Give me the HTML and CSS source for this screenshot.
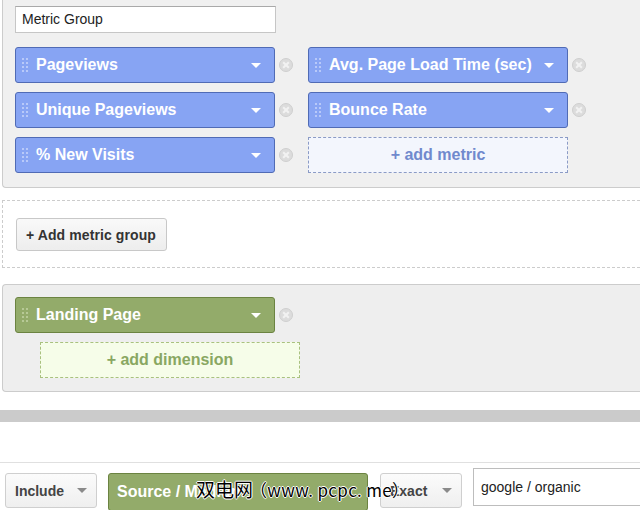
FILE: index.html
```html
<!DOCTYPE html>
<html>
<head>
<meta charset="utf-8">
<link rel="stylesheet" href="styles.css">
</head>
<body>
<div class="panel metrics">
  <div class="name-input">Metric Group</div>
  <div class="grid">
    <div class="cell"><div class="pill blue"><svg class="grip" width="6" height="14" viewBox="0 0 6 14"><g fill="#c9d6fb"><circle cx="1" cy="1" r="1"/><circle cx="5" cy="1" r="1"/><circle cx="1" cy="5" r="1"/><circle cx="5" cy="5" r="1"/><circle cx="1" cy="9" r="1"/><circle cx="5" cy="9" r="1"/><circle cx="1" cy="13" r="1"/><circle cx="5" cy="13" r="1"/></g></svg><span class="label">Pageviews</span><span class="arrow"></span></div><span class="close"></span></div>
    <div class="cell"><div class="pill blue"><svg class="grip" width="6" height="14" viewBox="0 0 6 14"><g fill="#c9d6fb"><circle cx="1" cy="1" r="1"/><circle cx="5" cy="1" r="1"/><circle cx="1" cy="5" r="1"/><circle cx="5" cy="5" r="1"/><circle cx="1" cy="9" r="1"/><circle cx="5" cy="9" r="1"/><circle cx="1" cy="13" r="1"/><circle cx="5" cy="13" r="1"/></g></svg><span class="label">Avg. Page Load Time (sec)</span><span class="arrow"></span></div><span class="close"></span></div>
    <div class="cell"><div class="pill blue"><svg class="grip" width="6" height="14" viewBox="0 0 6 14"><g fill="#c9d6fb"><circle cx="1" cy="1" r="1"/><circle cx="5" cy="1" r="1"/><circle cx="1" cy="5" r="1"/><circle cx="5" cy="5" r="1"/><circle cx="1" cy="9" r="1"/><circle cx="5" cy="9" r="1"/><circle cx="1" cy="13" r="1"/><circle cx="5" cy="13" r="1"/></g></svg><span class="label">Unique Pageviews</span><span class="arrow"></span></div><span class="close"></span></div>
    <div class="cell"><div class="pill blue"><svg class="grip" width="6" height="14" viewBox="0 0 6 14"><g fill="#c9d6fb"><circle cx="1" cy="1" r="1"/><circle cx="5" cy="1" r="1"/><circle cx="1" cy="5" r="1"/><circle cx="5" cy="5" r="1"/><circle cx="1" cy="9" r="1"/><circle cx="5" cy="9" r="1"/><circle cx="1" cy="13" r="1"/><circle cx="5" cy="13" r="1"/></g></svg><span class="label">Bounce Rate</span><span class="arrow"></span></div><span class="close"></span></div>
    <div class="cell"><div class="pill blue"><svg class="grip" width="6" height="14" viewBox="0 0 6 14"><g fill="#c9d6fb"><circle cx="1" cy="1" r="1"/><circle cx="5" cy="1" r="1"/><circle cx="1" cy="5" r="1"/><circle cx="5" cy="5" r="1"/><circle cx="1" cy="9" r="1"/><circle cx="5" cy="9" r="1"/><circle cx="1" cy="13" r="1"/><circle cx="5" cy="13" r="1"/></g></svg><span class="label">% New Visits</span><span class="arrow"></span></div><span class="close"></span></div>
    <div class="cell"><div class="add add-metric">+ add metric</div></div>
  </div>
</div>

<div class="dashed-section">
  <div class="btn">+ Add metric group</div>
</div>

<div class="panel dims">
  <div class="cell"><div class="pill green"><svg class="grip" width="6" height="14" viewBox="0 0 6 14"><g fill="#c3d3a6"><circle cx="1" cy="1" r="1"/><circle cx="5" cy="1" r="1"/><circle cx="1" cy="5" r="1"/><circle cx="5" cy="5" r="1"/><circle cx="1" cy="9" r="1"/><circle cx="5" cy="9" r="1"/><circle cx="1" cy="13" r="1"/><circle cx="5" cy="13" r="1"/></g></svg><span class="label">Landing Page</span><span class="arrow"></span></div><span class="close"></span></div>
  <div class="add add-dim">+ add dimension</div>
</div>

<div class="gray-bar"></div>
<div class="rule"></div>

<div class="filter-row">
  <div class="select include"><span>Include</span><span class="sel-arrow"></span></div>
  <div class="pill green source"><span class="label">Source / Medium</span></div>
  <div class="select exact"><span>Exact</span><span class="sel-arrow"></span></div>
  <div class="value-input">google / organic</div>
  <div class="watermark">双电网<span class="wm-latin">（www. pcpc. me）</span></div>
</div>
</body>
</html>
```

FILE: styles.css
```css
html, body {
  margin: 0;
  padding: 0;
  background: #ffffff;
  overflow: hidden;
}
body {
  width: 640px;
  height: 510px;
  font-family: "Liberation Sans", Arial, sans-serif;
}
.panel {
  margin-left: 2px;
  background: #f0f0f0;
  border: 1px solid #cccccc;
  border-right: none;
}
.metrics {
  border-top: none;
  border-bottom-left-radius: 4px;
  padding: 6px 0 14px 12px;
}
.name-input {
  box-sizing: border-box;
  width: 261px;
  height: 27px;
  background: #fff;
  border: 1px solid #c6c6c6;
  border-top-color: #a9a9a9;
  padding-left: 6px;
  font-size: 14px;
  line-height: 25px;
  color: #222;
}
.grid {
  margin-top: 14px;
  display: grid;
  grid-template-columns: 293px 293px;
  row-gap: 9px;
}
.cell {
  display: flex;
  align-items: center;
}
.pill {
  box-sizing: border-box;
  width: 260px;
  height: 36px;
  border: 1px solid;
  border-radius: 3px;
  display: flex;
  align-items: center;
  padding-left: 6px;
  color: #fff;
  font-weight: bold;
  font-size: 16px;
}
.blue {
  background: #87a4f3;
  border-color: #506bb5;
}
.green {
  background: #93ab6a;
  border-color: #6b8341;
}
.grip {
  margin-right: 8px;
  flex: none;
}
.label {
  flex: 1;
  white-space: nowrap;
}
.arrow {
  width: 0;
  height: 0;
  border-left: 5px solid transparent;
  border-right: 5px solid transparent;
  border-top: 5px solid #ffffff;
  margin-right: 13px;
  margin-top: 1px;
}
.close {
  box-sizing: border-box;
  width: 14px;
  height: 14px;
  margin-left: 4px;
  border-radius: 50%;
  background: #dcdcdc;
  border: 1px solid #cfcfcf;
  position: relative;
}
.close::before, .close::after {
  content: "";
  position: absolute;
  left: 5px;
  top: 2px;
  width: 2px;
  height: 8px;
  background: #f2f2f2;
  transform: rotate(45deg);
}
.close::after {
  transform: rotate(-45deg);
}
.add {
  box-sizing: border-box;
  width: 260px;
  height: 36px;
  border: 1px dashed;
  display: flex;
  align-items: center;
  justify-content: center;
  font-weight: bold;
  font-size: 16px;
}
.add-metric {
  background: #f3f6fd;
  border-color: #8b9bc6;
  color: #7089cd;
}
.dashed-section {
  margin-top: 12px;
  margin-left: 2px;
  border-top: 1px dashed #cccccc;
  border-left: 1px dashed #cccccc;
  border-bottom: 1px dashed #cccccc;
  padding: 17px 0 16px 13px;
}
.btn {
  box-sizing: border-box;
  display: inline-flex;
  align-items: center;
  height: 33px;
  padding: 0 10px 0 9px;
  border: 1px solid #c8c8c8;
  border-radius: 3px;
  background: linear-gradient(#f9f9f9, #ededed);
  color: #333;
  font-weight: bold;
  font-size: 14px;
  letter-spacing: 0.1px;
}
.dims {
  margin-top: 16px;
  border-radius: 4px 0 0 4px;
  background: #eeeeee;
  padding: 12px 0 13px 12px;
}
.add-dim {
  margin-top: 9px;
  margin-left: 25px;
  background: #f6fde9;
  border-color: #a9c17f;
  color: #89a762;
}
.gray-bar {
  margin-top: 18px;
  height: 12px;
  background: #cbcbcb;
}
.rule {
  margin-top: 40px;
  height: 1px;
  background: #e0e0e0;
}
.filter-row {
  display: flex;
  align-items: flex-start;
  padding-left: 5px;
  position: relative;
}
.select {
  box-sizing: border-box;
  height: 35px;
  margin-top: 10px;
  border: 1px solid #cfcfcf;
  border-radius: 3px;
  background: linear-gradient(#fbfbfb, #efefef);
  display: flex;
  align-items: center;
  padding-left: 9px;
  color: #444;
  font-weight: bold;
  font-size: 14px;
}
.sel-arrow {
  width: 0;
  height: 0;
  border-left: 5px solid transparent;
  border-right: 5px solid transparent;
  border-top: 5px solid #8a8a8a;
  margin-left: auto;
  margin-right: 9px;
}
.include {
  width: 92px;
}
.source {
  margin-left: 11px;
  margin-top: 10px;
  height: 38px;
  padding-left: 8px;
}
.exact {
  width: 82px;
  margin-left: 12px;
}
.value-input {
  box-sizing: border-box;
  flex: 1;
  height: 38px;
  margin-top: 5px;
  margin-left: 11px;
  border: 1px solid #bdbdbd;
  border-right: none;
  background: #fff;
  padding-left: 7px;
  font-size: 14px;
  line-height: 36px;
  color: #222;
}
.watermark {
  position: absolute;
  left: 196px;
  top: 12px;
  font-family: "Noto Sans CJK SC", "Liberation Sans", sans-serif;
  font-size: 19px;
  color: #000;
  white-space: nowrap;
  text-shadow: 1px 0 0 #fff, -1px 0 0 #fff, 0 1px 0 #fff, 0 -1px 0 #fff;
}
.wm-latin {
  font-size: 17px;
  letter-spacing: 0.3px;
  margin-left: -3px;
}
```
